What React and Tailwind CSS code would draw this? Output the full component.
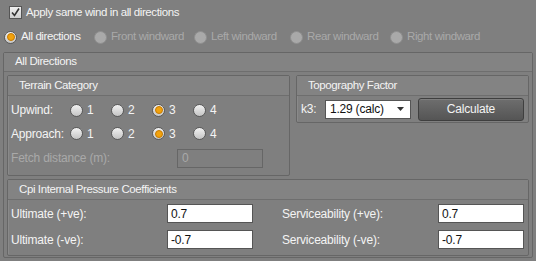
import React from 'react';

const font = { fontFamily: '"Liberation Sans", Arial, sans-serif' };

function Radio({ checked, disabled, label, className = '' }) {
  return (
    <div className={`flex items-center ${className}`}>
      <span
        className={`w-[13px] h-[13px] rounded-full border flex items-center justify-center shrink-0 ${
          disabled ? 'border-[#8f8f8f] bg-[#a9a9a9]' : 'border-[#5a5a5a] bg-gradient-to-b from-[#f2f2f2] to-[#c4c4c4]'
        }`}
      >
        {checked && <span className="w-[8px] h-[8px] rounded-full bg-[#f2a20c] border border-[#c67a00]" />}
      </span>
      <span className={`ml-[4px] ${disabled ? 'text-[#a9a9a9]' : 'text-[#f4f4f4]'}`}>{label}</span>
    </div>
  );
}

function Group({ title, className = '', children }) {
  return (
    <div className={`border border-[#666] rounded-[2px] shadow-[inset_1px_1px_0_#8a8a8a] ${className}`}>
      <div className="h-[20px] flex items-center pl-[11px] bg-[#838383] border-b border-[#6e6e6e] text-[#f4f4f4] text-[11.5px] tracking-[-0.4px]">
        {title}
      </div>
      {children}
    </div>
  );
}

function Field({ value, className = '' }) {
  return (
    <div className={`h-[19px] bg-white border border-[#555] flex items-center pl-[3px] text-[#111] ${className}`}>{value}</div>
  );
}

export default function App() {
  return (
    <div className="w-[536px] h-[261px] bg-[#7f7f7f] text-[12px] tracking-[-0.2px] text-[#f4f4f4] overflow-hidden" style={font}>
      <div className="flex items-center h-[24px] pl-[9px] pt-[1px]">
        <span className="w-[13px] h-[13px] bg-gradient-to-b from-[#f0f0f0] to-[#cfcfcf] border border-[#555] flex items-center justify-center">
          <svg width="11" height="11" viewBox="0 0 11 11">
            <path d="M2 5.5 L4.5 8.5 L9 1.5" fill="none" stroke="#333" strokeWidth="1.6" />
          </svg>
        </span>
        <span className="ml-[4px] text-[11.5px] tracking-[-0.4px]">Apply same wind in all directions</span>
      </div>
      <div className="flex items-center h-[26px] pl-[4px] text-[11.5px] tracking-[-0.4px]">
        <Radio checked label="All directions" className="w-[90px]" />
        <Radio disabled label="Front windward" className="w-[100px]" />
        <Radio disabled label="Left windward" className="w-[96px]" />
        <Radio disabled label="Rear windward" className="w-[100px]" />
        <Radio disabled label="Right windward" />
      </div>
      <div className="mx-[3px] mt-[2px] h-[206px] border border-[#666] rounded-[2px]">
        <div className="h-[19px] flex items-center pl-[11px] bg-[#838383] border-b border-[#6e6e6e] text-[11.5px] tracking-[-0.4px]">
          All Directions
        </div>
        <div className="flex gap-[6px] px-[3px] pt-[3px]">
          <Group title="Terrain Category" className="w-[284px] h-[101px]">
            <div className="grid grid-cols-[59px_41px_41px_41px_41px] items-center pl-[3px] h-[25px] pt-[3px]">
              <span>Upwind:</span>
              <Radio label="1" />
              <Radio label="2" />
              <Radio checked label="3" />
              <Radio label="4" />
            </div>
            <div className="grid grid-cols-[59px_41px_41px_41px_41px] items-center pl-[3px] h-[25px]">
              <span>Approach:</span>
              <Radio label="1" />
              <Radio label="2" />
              <Radio checked label="3" />
              <Radio label="4" />
            </div>
            <div className="flex items-center pl-[3px] h-[24px]">
              <span className="w-[166px] text-[#a9a9a9]">Fetch distance (m):</span>
              <div className="w-[86px] h-[19px] border border-[#666] pl-[4px] flex items-center text-[#a9a9a9]">0</div>
            </div>
          </Group>
          <Group title="Topography Factor" className="w-[234px] h-[48px]">
            <div className="flex items-center h-[26px] pl-[4px]">
              <span className="w-[24px]">k3:</span>
              <div className="w-[86px] h-[19px] bg-white border border-[#555] flex items-center justify-between pl-[4px] pr-[5px] text-[#111]">
                <span>1.29 (calc)</span>
                <svg width="8" height="5" viewBox="0 0 8 5"><path d="M0 0 H7 L3.5 4 Z" fill="#333" /></svg>
              </div>
              <div className="ml-[7px] w-[106px] h-[23px] rounded-[3px] border border-[#3f3f3f] bg-gradient-to-b from-[#6e6e6e] to-[#555] flex items-center justify-center shadow-[inset_0_1px_0_#7e7e7e]">
                Calculate
              </div>
            </div>
          </Group>
        </div>
        <div className="px-[3px] pt-[3px]">
          <Group title="Cpi Internal Pressure Coefficients" className="h-[77px]">
            <div className="grid grid-cols-[271px_250px] pl-[3px] pt-[4px] gap-y-[7px]">
              <div className="flex items-center">
                <span className="w-[156px]">Ultimate (+ve):</span>
                <Field value="0.7" className="w-[86px]" />
              </div>
              <div className="flex items-center">
                <span className="w-[156px]">Serviceability (+ve):</span>
                <Field value="0.7" className="w-[86px]" />
              </div>
              <div className="flex items-center">
                <span className="w-[156px]">Ultimate (-ve):</span>
                <Field value="-0.7" className="w-[86px]" />
              </div>
              <div className="flex items-center">
                <span className="w-[156px]">Serviceability (-ve):</span>
                <Field value="-0.7" className="w-[86px]" />
              </div>
            </div>
          </Group>
        </div>
      </div>
    </div>
  );
}
